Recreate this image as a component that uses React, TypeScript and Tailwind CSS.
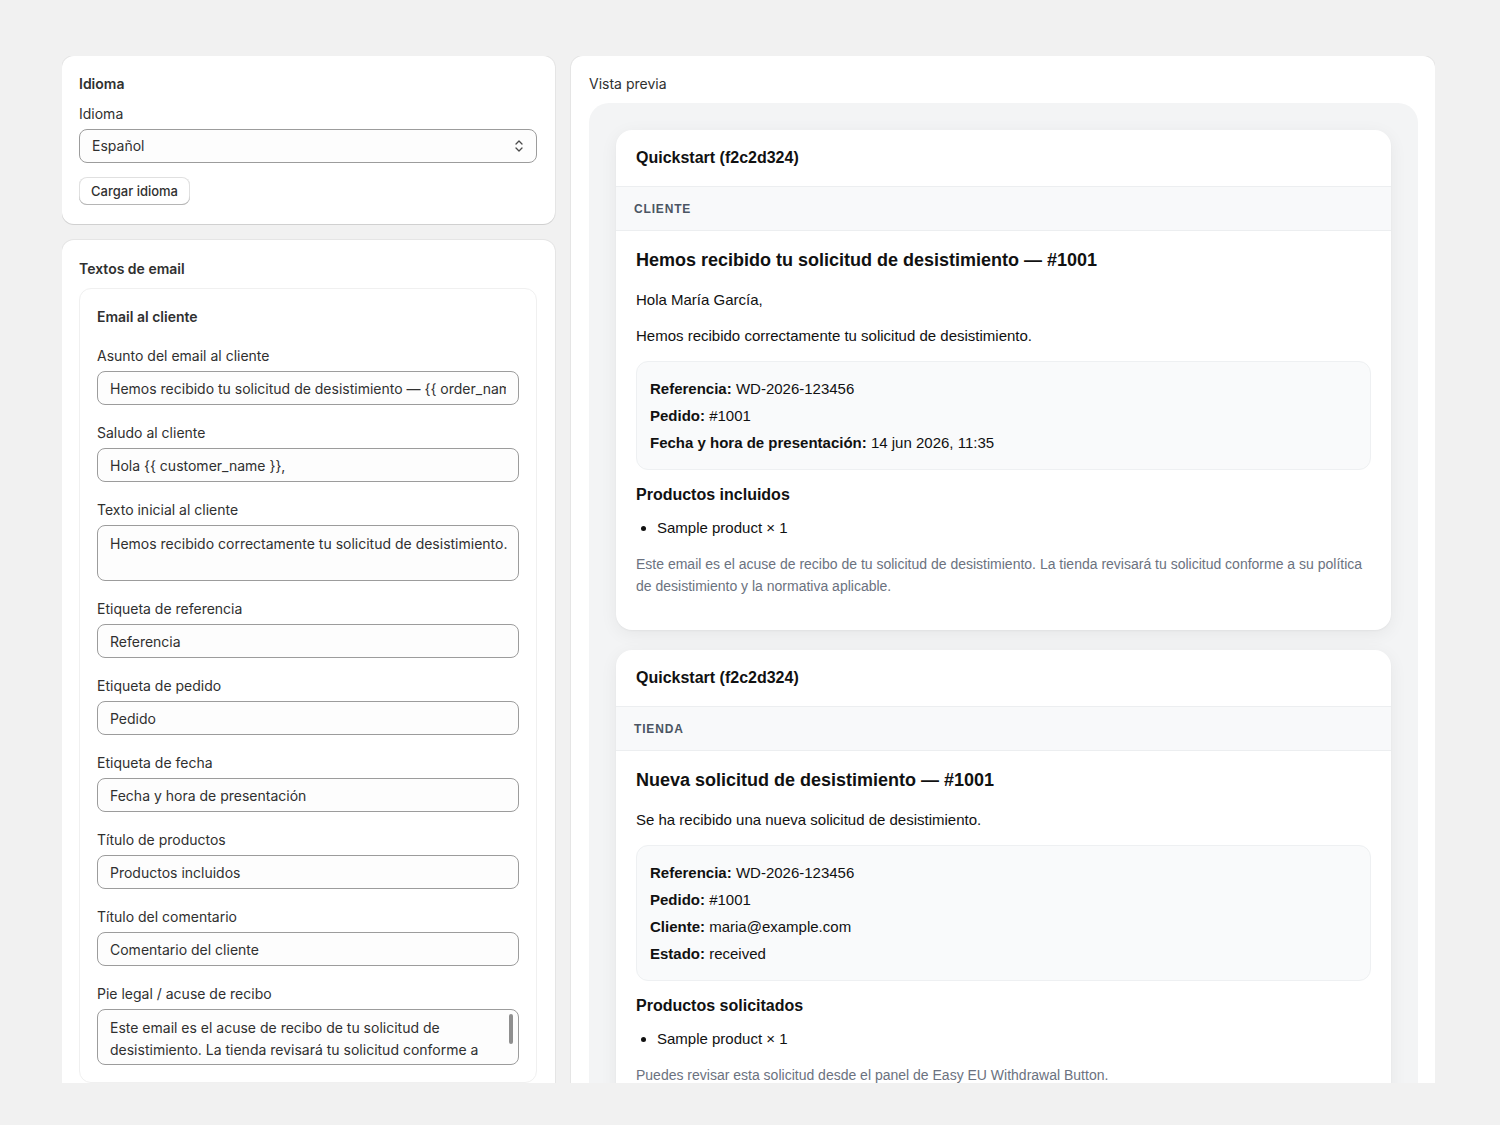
import React from "react";

const inter = "font-['Inter','Noto_Sans',sans-serif]";
const arial = "font-['Liberation_Sans',Arial,sans-serif]";

const fieldBox =
  "w-full rounded-lg border border-[#9c9c9c] bg-[#fdfdfd] pl-3 text-sm text-[#303030] outline-none";

const Field = ({ label, value }: { label: string; value: string }) => (
  <div className="flex flex-col gap-[5px]">
    <label className="text-sm leading-5 text-[#303030]">{label}</label>
    <input readOnly value={value} className={`h-[34px] pr-3 ${fieldBox}`} />
  </div>
);

const Area = ({
  label,
  value,
  scroll,
}: {
  label: string;
  value: string;
  scroll?: boolean;
}) => (
  <div className="flex flex-col gap-[5px]">
    <label className="text-sm leading-5 text-[#303030]">{label}</label>
    <div className="relative">
      <textarea
        readOnly
        value={value}
        className={`block h-[56px] resize-none overflow-hidden pt-[7px] leading-[22px] ${
          scroll ? "pr-[22px]" : "pr-1"
        } ${fieldBox}`}
      />
      {scroll && (
        <div className="absolute right-[6px] top-[5px] h-[30px] w-[4px] rounded-full bg-[#8f8f8f]" />
      )}
    </div>
  </div>
);

const Card = ({ children, className = "" }: { children: React.ReactNode; className?: string }) => (
  <div
    className={`rounded-xl bg-white shadow-[0_1px_0_0_rgba(26,26,26,0.1),0_0_0_1px_rgba(26,26,26,0.05)] ${className}`}
  >
    {children}
  </div>
);

const Chevrons = () => (
  <svg width="10" height="16" viewBox="0 0 10 16" fill="none" stroke="#4a4a4a" strokeWidth="1.3" strokeLinecap="round" strokeLinejoin="round">
    <path d="M2 6l3-3 3 3" />
    <path d="M2 10l3 3 3-3" />
  </svg>
);

type Row = [string, string];

const EmailPreview = ({
  band,
  title,
  paragraphs,
  rows,
  productsTitle,
  note,
}: {
  band: string;
  title: string;
  paragraphs: string[];
  rows: Row[];
  productsTitle: string;
  note: string;
}) => (
  <div className={`overflow-hidden rounded-2xl bg-white shadow-[0_4px_18px_rgba(0,0,0,0.06),0_1px_2px_rgba(0,0,0,0.04)] ${arial}`}>
    <div className="flex h-[57px] items-center border-b border-[#eceef0] px-5">
      <span className="text-base font-bold text-[#111]">Quickstart (f2c2d324)</span>
    </div>
    <div className="flex h-[44px] items-center border-b border-[#eceef0] bg-[#f8f9fa] px-[18px]">
      <span className="text-xs font-bold uppercase tracking-[0.07em] text-[#4b5563]">{band}</span>
    </div>
    <div className="px-5 pb-[33px] pt-[18px] text-[#111]">
      <h3 className="text-lg font-bold leading-[22px]">{title}</h3>
      <div className="mt-[18px] flex flex-col gap-[15px]">
        {paragraphs.map((p) => (
          <p key={p} className="text-[15px] leading-[21px]">
            {p}
          </p>
        ))}
      </div>
      <div className="mt-[15px] rounded-xl border border-[#eef0f2] bg-[#f9fafb] px-[13px] py-[13px]">
        {rows.map(([k, v]) => (
          <div key={k} className="text-[15px] leading-[27px]">
            <span className="font-bold">{k}:</span> {v}
          </div>
        ))}
      </div>
      <h4 className="mt-[15px] text-base font-bold leading-5">{productsTitle}</h4>
      <ul className="mt-[12px] list-disc pl-[21px] text-[15px] leading-[21px]">
        <li>Sample product × 1</li>
      </ul>
      <p className="mt-[15px] text-sm leading-[22px] text-[#6b7280]">{note}</p>
    </div>
  </div>
);

export default function App() {
  return (
    <div className={`h-[1125px] overflow-hidden bg-[#f1f1f1] pl-[62px] pr-[65px] pt-[56px] ${inter}`}>
      <div className="grid h-[1027px] grid-cols-[493px_864px] items-start gap-4 overflow-hidden">
        {/* left column */}
        <div className="flex flex-col gap-4">
          <Card className="pb-[19px] pl-[17px] pr-[18px] pt-[18px]">
            <h2 className="text-sm font-semibold leading-5 text-[#303030]">Idioma</h2>
            <div className="mt-[10px] flex flex-col gap-[5px]">
              <label className="text-sm leading-5 text-[#303030]">Idioma</label>
              <div className="relative flex h-[34px] items-center rounded-lg border border-[#9c9c9c] bg-[#fdfdfd] pl-3 pr-3">
                <span className="text-sm text-[#303030]">Español</span>
                <span className="ml-auto flex items-center">
                  <Chevrons />
                </span>
              </div>
            </div>
            <button className="mt-[14px] h-[28px] rounded-lg bg-white px-3 pt-[1px] text-[13px] font-medium text-[#303030] shadow-[inset_0_-1px_0_0_#b5b5b5,inset_0_0_0_1px_rgba(0,0,0,0.12)]">
              Cargar idioma
            </button>
          </Card>

          <Card className="h-[900px] pl-[17px] pr-[18px] pt-[19px]">
            <h2 className="text-sm font-semibold leading-5 text-[#303030]">Textos de email</h2>
            <div className="mt-[9px] rounded-xl border border-[#f0f0f0] p-[17px] pt-[18px]">
              <h3 className="text-sm font-semibold leading-5 text-[#303030]">Email al cliente</h3>
              <div className="mt-[19px] flex flex-col gap-[18px]">
                <Field
                  label="Asunto del email al cliente"
                  value="Hemos recibido tu solicitud de desistimiento — {{ order_name }}"
                />
                <Field label="Saludo al cliente" value="Hola {{ customer_name }}," />
                <Area
                  label="Texto inicial al cliente"
                  value="Hemos recibido correctamente tu solicitud de desistimiento."
                />
                <Field label="Etiqueta de referencia" value="Referencia" />
                <Field label="Etiqueta de pedido" value="Pedido" />
                <Field label="Etiqueta de fecha" value="Fecha y hora de presentación" />
                <Field label="Título de productos" value="Productos incluidos" />
                <Field label="Título del comentario" value="Comentario del cliente" />
                <Area
                  scroll
                  label="Pie legal / acuse de recibo"
                  value="Este email es el acuse de recibo de tu solicitud de desistimiento. La tienda revisará tu solicitud conforme a su política de desistimiento y la normativa aplicable."
                />
              </div>
            </div>
          </Card>
        </div>

        {/* right column */}
        <Card className="h-[1100px] pl-[18px] pr-[17px] pt-[18px]">
          <h2 className="text-sm leading-5 text-[#303030]">Vista previa</h2>
          <div className="mt-[9px] flex flex-col gap-[20px] rounded-[20px] bg-[#f3f4f5] p-[27px]">
            <EmailPreview
              band="Cliente"
              title="Hemos recibido tu solicitud de desistimiento — #1001"
              paragraphs={[
                "Hola María García,",
                "Hemos recibido correctamente tu solicitud de desistimiento.",
              ]}
              rows={[
                ["Referencia", "WD-2026-123456"],
                ["Pedido", "#1001"],
                ["Fecha y hora de presentación", "14 jun 2026, 11:35"],
              ]}
              productsTitle="Productos incluidos"
              note="Este email es el acuse de recibo de tu solicitud de desistimiento. La tienda revisará tu solicitud conforme a su política de desistimiento y la normativa aplicable."
            />
            <EmailPreview
              band="Tienda"
              title="Nueva solicitud de desistimiento — #1001"
              paragraphs={["Se ha recibido una nueva solicitud de desistimiento."]}
              rows={[
                ["Referencia", "WD-2026-123456"],
                ["Pedido", "#1001"],
                ["Cliente", "maria@example.com"],
                ["Estado", "received"],
              ]}
              productsTitle="Productos solicitados"
              note="Puedes revisar esta solicitud desde el panel de Easy EU Withdrawal Button."
            />
          </div>
        </Card>
      </div>
    </div>
  );
}
